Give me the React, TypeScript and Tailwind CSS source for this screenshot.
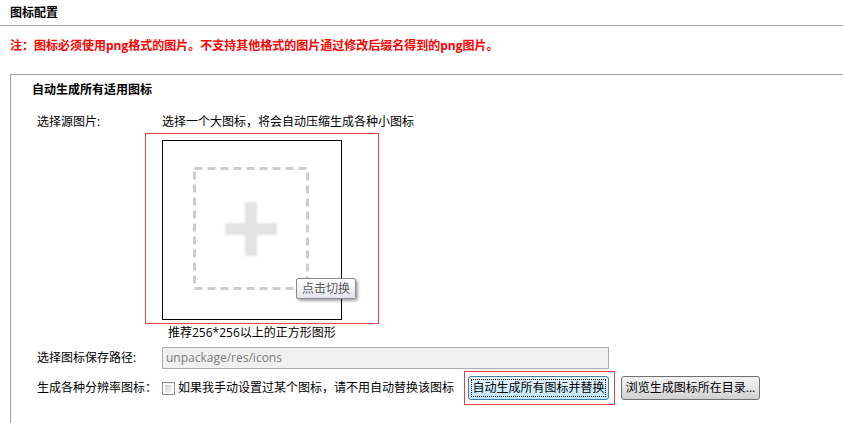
import React from "react";

const FONT = {
  fontFamily: '"Open Sans", "Noto Sans CJK SC", "Noto Sans", sans-serif',
};

function Placeholder() {
  return (
    <svg width="178" height="178" viewBox="0 0 178 178" className="block">
      <defs>
        <filter id="blur1" x="-20%" y="-20%" width="140%" height="140%">
          <feGaussianBlur stdDeviation="0.8" />
        </filter>
      </defs>
      <rect
        x="31.5"
        y="27.5"
        width="113"
        height="120"
        fill="none"
        stroke="#cdcdcd"
        strokeWidth="3"
        strokeDasharray="8 5"
      />
      <g fill="#e3e3e3" filter="url(#blur1)">
        <rect x="62" y="82" width="52" height="12" />
        <rect x="82" y="61" width="12" height="54" />
      </g>
    </svg>
  );
}

export default function App() {
  return (
    <div
      className="w-[843px] h-[423px] overflow-hidden bg-white text-black text-[12px] leading-[16px] flex flex-col"
      style={FONT}
    >
      <div className="h-[26px] shrink-0 border-b border-[#a0a0a0] pl-[10px] flex items-center font-bold">
        图标配置
      </div>
      <div className="mt-[12px] pl-[10px] font-bold text-[#ff0000] shrink-0">
        注：图标必须使用png格式的图片。不支持其他格式的图片通过修改后缀名得到的png图片。
      </div>
      <div className="mt-[20px] ml-[10px] flex-1 border-t border-l border-[#a0a0a0]">
        <div className="pt-[7px] pl-[21px] font-bold">自动生成所有适用图标</div>
        <div className="mt-[16px] pl-[26px] grid grid-cols-[125px_1fr]">
          <div>选择源图片:</div>
          <div>选择一个大图标，将会自动压缩生成各种小图标</div>

          <div />
          <div>
            <div className="mt-[3px] -ml-[17px] w-[234px] border border-[#f04040] pl-[16px] pt-[6px] pr-[36px] pb-[3px]">
              <div className="relative w-[180px] h-[180px] border border-black">
                <Placeholder />
                <div
                  className="absolute left-[133px] top-[137px] h-[21px] px-[5px] flex items-center whitespace-nowrap border border-[#8a8a8a] rounded-[2px] text-[#5a5a5a] bg-gradient-to-b from-white to-[#e4e5ef] shadow-[2px_2px_3px_rgba(0,0,0,0.35)]"
                >
                  点击切换
                </div>
              </div>
            </div>
            <div className="mt-[1px] ml-[6px]">推荐256*256以上的正方形图形</div>
          </div>

          <div className="mt-[6px] flex items-center">选择图标保存路径:</div>
          <div className="mt-[6px]">
            <div className="w-[447px] h-[22px] border border-[#ababab] bg-[#f0f0f0] text-[#7a7a7a] pl-[3px] flex items-center">
              unpackage/res/icons
            </div>
          </div>

          <div className="mt-[2px] flex items-center">生成各种分辨率图标：</div>
          <div className="mt-[2px] flex items-center">
            <span className="w-[13px] h-[13px] border border-[#8e8f8f] bg-white p-[2px] shrink-0">
              <span className="block w-full h-full bg-gradient-to-br from-[#cbcfd5] to-[#f6f6f6]" />
            </span>
            <span className="ml-[3px] whitespace-nowrap">如果我手动设置过某个图标，请不用自动替换该图标</span>
            <span className="ml-[10px] border border-[#e84040] pl-[3px] pr-[5px] py-[4px] shrink-0">
              <span className="flex items-center justify-center w-[141px] h-[24px] rounded-[3px] border border-[#3c7fb1] bg-gradient-to-b from-[#eaf6fd] to-[#bee6fd] p-[2px]">
                <span className="flex-1 h-full flex items-center justify-center border border-dotted border-black whitespace-nowrap">
                  自动生成所有图标并替换
                </span>
              </span>
            </span>
            <span className="ml-[6px] flex items-center justify-center w-[139px] h-[24px] rounded-[3px] border border-[#707070] bg-gradient-to-b from-[#f2f2f2] via-[#e6e6e6] to-[#cfcfcf] whitespace-nowrap">
              浏览生成图标所在目录...
            </span>
          </div>
        </div>
      </div>
    </div>
  );
}
